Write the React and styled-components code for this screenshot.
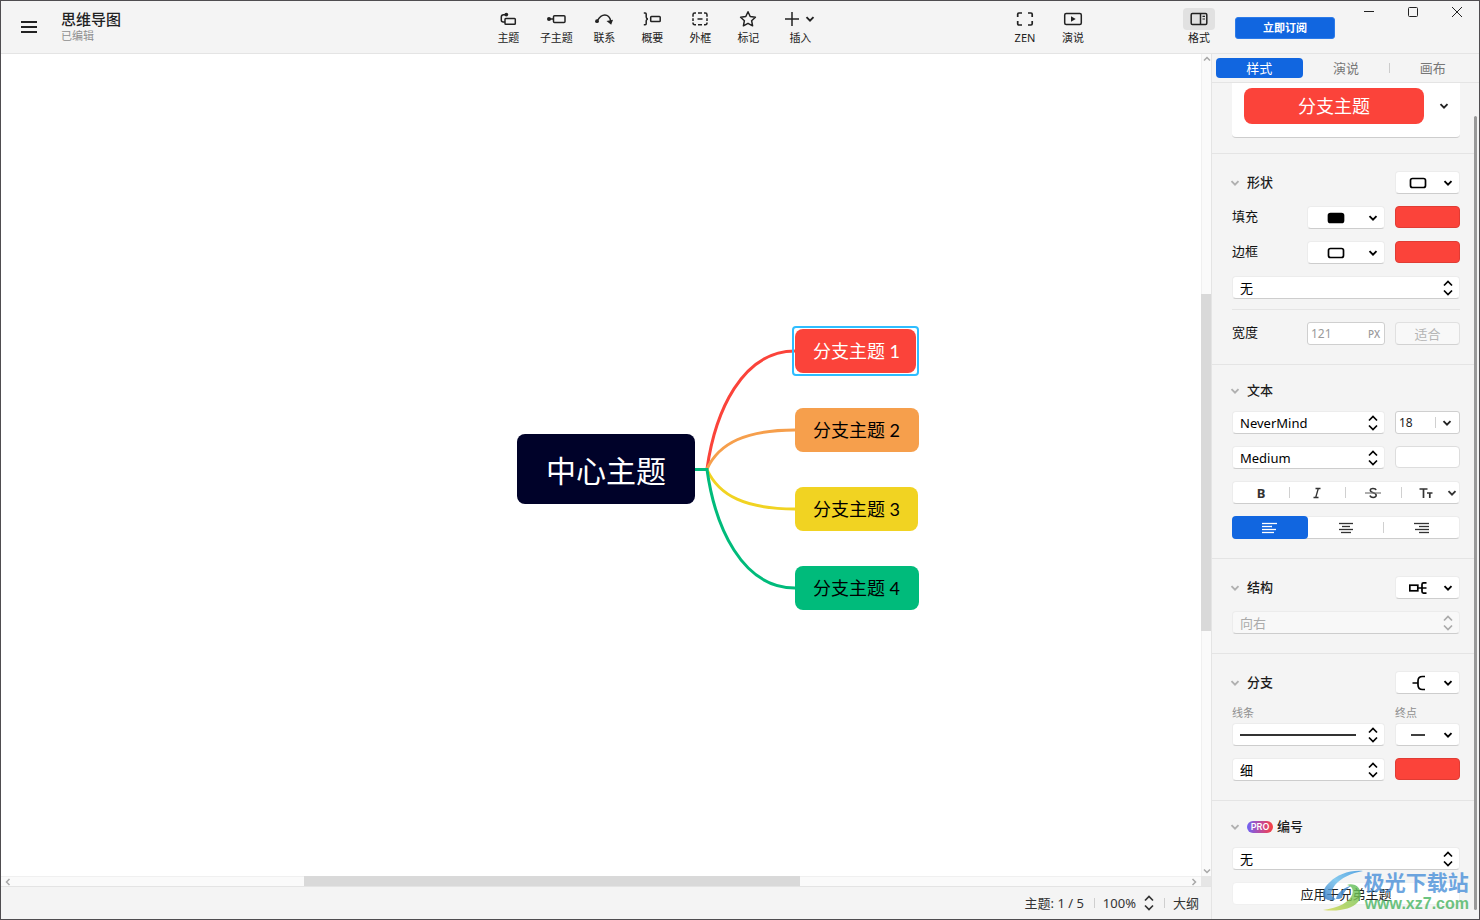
import styled, { createGlobalStyle, css } from 'styled-components'

const Ink = '#222222'
const Grey = '#f4f4f4'
const Line = '#e4e4e4'
const Blue = '#1166e0'
const Red = '#fb433a'
const UiFont = '"Noto Sans", "Noto Sans CJK SC", sans-serif'

const GlobalStyle = createGlobalStyle`
    *, *::before, *::after {
        box-sizing: border-box;
    }

    body {
        margin: 0;
        font-family: ${UiFont};
        font-size: 13px;
        line-height: 16px;
        color: ${Ink};
    }

    button, input, select {
        margin: 0;
        padding: 0;
        border: 0;
        background: none;
        color: inherit;
        font: inherit;
    }

    svg {
        display: block;
        flex: none;
        fill: none;
        stroke: currentColor;
        stroke-width: 1.5;
    }
`

const Window = styled.div`
    position: relative;
    display: flex;
    flex-direction: column;
    height: 100vh;
    border: 1px solid #4f4d50;
    background: #ffffff;
    overflow: hidden;
`

/* ---------- header ---------- */

const Header = styled.header`
    display: flex;
    height: 53px;
    flex: none;
    background: ${Grey};
    border-bottom: 1px solid ${Line};
`

const Spacer = styled.div`
    flex: ${({ $grow }) => $grow} 1 0;
    display: flex;
    align-items: center;
    min-width: 0;
`

const MenuButton = styled.button`
    padding: 0 24px 0 20px;

    svg {
        stroke-width: 2;
    }
`

const Title = styled.h1`
    margin: 0;
    font-size: 15px;
    line-height: 18px;
    font-weight: 500;
`

const Subtitle = styled.p`
    margin: 0;
    font-size: 11px;
    line-height: 16px;
    color: #8f8f8f;
`

const Tools = styled.nav`
    display: flex;
    margin-right: ${({ $gap }) => $gap || 0}px;
`

const Tool = styled.button`
    display: flex;
    flex-direction: column;
    align-items: center;
    width: ${({ $wide }) => ($wide ? 56 : 48)}px;
    padding-top: 7px;
    font-size: 11px;
    line-height: 16px;
`

const ToolIcon = styled.span`
    display: flex;
    align-items: center;
    justify-content: center;
    gap: 6px;
    width: 32px;
    height: 22px;
    border-radius: 4px;
    background: ${({ $on }) => ($on ? '#e1e1e1' : 'transparent')};
`

const Subscribe = styled.button`
    align-self: flex-start;
    width: 100px;
    height: 22px;
    margin: 16px 12px 0;
    border-radius: 3px;
    background: ${Blue};
    border: 1px solid #2c7be9;
    color: #ffffff;
    font-size: 11px;
    font-weight: 700;
`

const WindowButton = styled.button`
    display: flex;
    align-items: center;
    justify-content: center;
    width: 44px;
    height: 22px;

    svg {
        stroke-width: 1;
        overflow: visible;
    }
`

/* ---------- canvas ---------- */

const Main = styled.div`
    display: flex;
    flex: 1;
    min-height: 0;
`

const Work = styled.main`
    display: grid;
    grid-template: minmax(0, 1fr) 10px 33px / minmax(0, 1fr) 10px;
    flex: 1;
    min-width: 0;
`

const Canvas = styled.section`
    position: relative;
    overflow: hidden;
`

const Links = styled.svg`
    position: absolute;
    left: 694px;
    top: 280px;
    stroke-width: 3;
`

const Topic = styled.div`
    position: absolute;
    left: ${({ $x }) => $x}px;
    top: ${({ $y }) => $y}px;
    width: ${({ $w }) => $w}px;
    height: 44px;
    padding-left: 18px;
    border-radius: 8px;
    background: ${({ $color }) => $color};
    color: #000000;
    font-family: Lato, "Noto Sans CJK SC", sans-serif;
    font-size: 18px;
    line-height: 44px;
    white-space: nowrap;

    ${({ $selected }) => $selected && css`
        color: #ffffff;

        &::after {
            content: '';
            position: absolute;
            inset: -3px;
            border: 2px solid #2ebdff;
            border-radius: 4px;
        }
    `}
`

const CentralTopic = styled(Topic)`
    height: 70px;
    padding-left: 29px;
    color: #ffffff;
    font-size: 30px;
    line-height: 72px;
`

const Scrollbar = styled.div`
    display: flex;
    flex-direction: ${({ $vertical }) => ($vertical ? 'column' : 'row')};
    align-items: center;
    justify-content: space-between;
    background: #fafafa;
    color: #a8a8a8;
    padding: ${({ $vertical }) => ($vertical ? '2px 0' : '0 4px')};
    border-${({ $vertical }) => ($vertical ? 'left' : 'top')}: 1px solid #f0f0f0;
`

const Track = styled.div`
    display: flex;
    flex: 1;
    align-self: stretch;
    flex-direction: inherit;
    margin: ${({ $vertical }) => ($vertical ? '0 0 0 -1px' : '-1px 0 0')};
`

const Gap = styled.div`
    flex: ${({ $grow }) => $grow} 1 0;
`

const Thumb = styled(Gap)`
    background: #d9d9d9;
`

const Corner = styled.div`
    background: #e6e6e6;
`

const Footer = styled.footer`
    grid-column: 1 / -1;
    display: flex;
    align-items: center;
    justify-content: flex-end;
    padding-right: 12px;
    background: ${Grey};
    border-top: 1px solid ${Line};
`

const FooterItem = styled.button`
    display: flex;
    align-items: center;
    gap: 8px;
    color: #333333;

    & + & {
        margin-left: 10px;
        padding-left: 9px;
        background: linear-gradient(#cfcfcf, #cfcfcf) 0 50% / 1px 10px no-repeat;
    }
`

/* ---------- format panel ---------- */

const Panel = styled.aside`
    display: flex;
    flex-direction: column;
    width: 268px;
    flex: none;
    background: ${Grey};
    border-left: 1px solid ${Line};
`

const Tabs = styled.div`
    display: flex;
    flex: none;
    height: 29px;
    padding: 4px 3px 4px 4px;
    border-bottom: 1px solid ${Line};
`

const Tab = styled.button`
    flex: 1;
    border-radius: 4px;
    color: #777777;
    ${({ $divided }) => $divided && 'background: linear-gradient(#cccccc, #cccccc) 0 50% / 1px 10px no-repeat;'}

    &[aria-selected='true'] {
        background: ${Blue};
        color: #ffffff;
    }
`

const PanelBody = styled.div`
    display: flex;
    flex: 1;
    min-height: 0;
    overflow: hidden;
`

const Sections = styled.div`
    flex: 1;
    min-width: 0;
`

const PanelThumb = styled.div`
    width: 3px;
    margin: 33px 2px 9px 0;
    border-radius: 2px;
    background: #999999;
`

const Section = styled.section`
    display: flex;
    flex-direction: column;
    gap: 12px;
    padding: 17px 14px 19px 20px;
    border-bottom: 1px solid ${Line};

    &:last-child {
        border-bottom: 0;
    }
`

const box = css`
    height: 23px;
    border: 1px solid #ececec;
    border-bottom-color: #cdcdcd;
    border-radius: 4px;
    background: #ffffff;
`

const Row = styled.div`
    display: grid;
    grid-template-columns: ${({ $cols }) => $cols || '1fr 78px 65px'};
    gap: 10px;
    align-items: start;
`

const RowLabel = styled.label`
    line-height: 20px;
    color: #111111;
`

const SectionHead = styled.div`
    display: flex;
    align-items: center;
    min-height: 17px;
`

const SectionTitle = styled.h2`
    display: flex;
    align-items: center;
    flex: 1;
    margin: 0;
    font-size: 13px;
    line-height: 17px;
    font-weight: 500;
    color: #1c1c1c;

    svg {
        margin: 0 7px 0 -2px;
        color: #b0b0b0;
    }
`

const Pro = styled.span`
    width: 26px;
    margin-right: 4px;
    border-radius: 6px;
    background: linear-gradient(90deg, #6e63f5, #c04a98 55%, #fa4040);
    color: #ffffff;
    font-family: Inter, sans-serif;
    font-size: 9px;
    line-height: 12px;
    font-weight: 600;
    text-align: center;
`

const Divider = styled.hr`
    width: 100%;
    margin: -2px 0 0;
    border: 0;
    border-top: 1px solid ${Line};
`

const PreviewCard = styled.div`
    display: flex;
    align-items: flex-start;
    margin: 0 14px 0 20px;
    padding: 5px 11px 13px 12px;
    background: #ffffff;
    border-bottom: 1px solid #cdcdcd;
    border-radius: 0 0 4px 4px;
`

const PreviewWrap = styled.div`
    padding-bottom: 15px;
    border-bottom: 1px solid ${Line};
`

const Preview = styled.button`
    display: flex;
    align-items: center;
    gap: 15px;
`

const PreviewTopic = styled.span`
    width: 180px;
    border-radius: 8px;
    background: ${Red};
    color: #ffffff;
    font-size: 18px;
    line-height: 36px;
`

const IconSelect = styled.button`
    ${box}
    display: flex;
    align-items: center;
    justify-content: space-between;
    width: ${({ $full }) => ($full ? '100%' : '65px')};
    padding: 0 6px 0 ${({ $full }) => ($full ? 19 : 13)}px;
    color: #000000;
`

const Swatch = styled.button`
    height: 22px;
    border: 1px solid ${({ $color }) => ($color === '#ffffff' ? '#dddddd' : '#e03c34')};
    border-radius: 4px;
    background: ${({ $color }) => $color};
`

const SelectWrap = styled.div`
    ${box}
    display: grid;
    grid-template-columns: minmax(0, 1fr) auto;
    align-items: center;
    padding-right: 6px;
    color: ${({ $off }) => ($off ? '#aaaaaa' : '#000000')};
    ${({ $off }) => $off && 'background: #f8f8f8;'}

    select {
        grid-area: 1 / 1 / 2 / 3;
        width: 100%;
        height: 21px;
        padding: 0 20px 0 7px;
        appearance: none;
        opacity: 1;
        outline: none;
    }

    svg {
        grid-area: 1 / 2;
        pointer-events: none;
    }
`

const LineSample = styled.span`
    flex: 1;
    height: 2px;
    margin-right: 12px;
    background: #333333;
`

const LineSelect = styled(IconSelect)`
    width: 100%;
    padding: 0 6px 0 7px;
`

const NumberField = styled.span`
    display: flex;
    align-items: center;
    height: 23px;
    padding: 0 4px 0 3px;
    border: 1px solid #cfcfcf;
    border-radius: 3px;
    background: #ffffff;
    color: #9a9a9a;
    font-size: 10px;
    font-weight: 500;

    input {
        flex: 1;
        width: 100%;
        min-width: 0;
        font-size: 12px;
        font-weight: 400;
    }
`

const SizeField = styled(NumberField)`
    padding-right: 7px;
    color: ${Ink};
    gap: 6px;
`

const Tick = styled.span`
    width: 1px;
    height: 11px;
    background: #d0d0d0;
`

const FitButton = styled.button`
    height: 23px;
    border: 1px solid #e0e0e0;
    border-bottom-color: #d2d2d2;
    border-radius: 4px;
    background: #f8f8f8;
    color: #b5b5b5;
`

const Segments = styled.div`
    ${box}
    display: flex;
    align-items: center;
`

const Segment = styled.button`
    display: flex;
    align-items: center;
    justify-content: ${({ $menu }) => ($menu ? 'flex-end' : 'center')};
    gap: 14px;
    flex: 1;
    height: 21px;
    padding-right: ${({ $menu }) => ($menu ? 2 : 0)}px;
    color: #333333;

    & + & {
        background: linear-gradient(#d0d0d0, #d0d0d0) 0 50% / 1px 11px no-repeat;
    }

    &[aria-pressed='true'] {
        height: 23px;
        margin: -1px 0 -1px -1px;
        border-radius: 4px;
        background: ${Blue};
        color: #ffffff;
    }

    &[aria-pressed='true'] + & {
        background: none;
    }
`

const SmallLabels = styled(Row)`
    margin: 0 0 -8px;
    font-size: 11px;
    line-height: 13px;
    color: #8f8f8f;
`

const ApplyButton = styled.button`
    ${box}
    border-color: #f0f0f0;
`

/* ---------- watermark ---------- */

const Watermark = styled.div`
    position: absolute;
    right: 10px;
    bottom: 7px;
    display: flex;
    align-items: center;
    opacity: 0.8;
    pointer-events: none;
    font-weight: 700;

    svg {
        stroke: none;
    }
`

const WatermarkName = styled.div`
    font-size: 21px;
    line-height: 26px;
    color: #4a90d9;
`

const WatermarkSite = styled.div`
    padding-left: 1px;
    font-family: "Liberation Sans", sans-serif;
    font-size: 16px;
    line-height: 17px;
    color: #48b562;
`

/* ---------- icons ---------- */

const Down = () => (
    <svg width="10" height="8" viewBox="0 0 10 8"><path d="M1.500 2.200 5 5.700l3.500-3.500" strokeWidth="1.900" /></svg>
)

const UpDown = () => (
    <svg width="10" height="16" viewBox="0 0 10 16"><path d="M1 5.500 5 1.500l4 4M1 10.500l4 4 4-4" strokeWidth="1.700" /></svg>
)

const RectIcon = ({ fill }) => (
    <svg width="18" height="12" viewBox="0 0 18 12"><rect x="1.500" y="1.500" width="15" height="9" rx="2" fill={fill} strokeWidth="1.700" /></svg>
)

const icons = {
    topic: <svg width="18" height="18" viewBox="0 0 18 18"><rect x="6" y="8.500" width="10.300" height="5.700" rx=".8" /><path d="M6 12H4.300q-2 0-2-2V7q0-2.300 2.300-2.300H7" /><circle cx="7.300" cy="4.600" r="1.900" fill="currentColor" stroke="none" /></svg>,
    subtopic: <svg width="20" height="18" viewBox="0 0 20 18"><circle cx="3" cy="9" r="2" fill="currentColor" stroke="none" /><path d="M3 9h4" /><rect x="7.500" y="5.700" width="11.500" height="6.800" rx="1" /></svg>,
    relation: <svg width="20" height="18" viewBox="0 0 20 18"><path d="M3.300 10.800C5.500 7 8 5 10.800 5s5 2 6 6" /><circle cx="3" cy="11.200" r="1.900" fill="currentColor" stroke="none" /><path d="m12.500 11 6.500-1.200-1.800 5z" fill="currentColor" stroke="none" /></svg>,
    summary: <svg width="18" height="18" viewBox="0 0 18 18"><path d="M.8 3h1.400q1 0 1 1v3q0 1.500 1.600 1.900-1.600.4-1.600 1.900v3q0 1-1 1H.8" /><rect x="7.700" y="6.500" width="9.500" height="5" rx=".8" /></svg>,
    boundary: <svg width="18" height="18" viewBox="0 0 18 18"><path d="M2 6.800V4.700Q2 3 3.700 3H5M7 3h4M13 3h1.300Q16 3 16 4.700v2.100M16 8.200v2.800M16 12.400v.3q0 2-1.700 2H13M11 14.700H7M5 14.700H3.700q-1.700 0-1.700-2v-.3M2 11V8.200" /><path d="M6.500 9h5" /></svg>,
    marker: <svg width="18" height="18" viewBox="0 0 18 18"><path d="m9 1.800 2.200 4.700 5.200.7-3.800 3.500 1 5.100L9 13.300l-4.600 2.500 1-5.100-3.800-3.500 5.200-.7z" strokeLinejoin="round" /></svg>,
    insert: <><svg width="14" height="14" viewBox="0 0 14 14"><path d="M7 0v14M0 7h14" /></svg><Down /></>,
    zen: <svg width="18" height="18" viewBox="0 0 18 18"><path d="M1.700 7V4.200q0-1.200 1.200-1.200h3.100M12 3h3q1.200 0 1.200 1.200V7M16.200 11v2.800q0 1.200-1.200 1.200h-3M6 15H2.900q-1.200 0-1.200-1.200V11" strokeWidth="1.700" /></svg>,
    present: <svg width="20" height="18" viewBox="0 0 20 18"><rect x="1.700" y="3.500" width="16.600" height="11" rx="1.500" /><path d="M8 6.300v5.400L12.700 9z" fill="currentColor" stroke="none" /></svg>,
    format: <svg width="18" height="18" viewBox="0 0 18 18"><rect x="1.200" y="3.500" width="15.600" height="11" rx="1.200" /><path d="M10.500 3.500v11" /><path d="M12.500 6.300H15M12.500 9H15" strokeWidth="1.200" /></svg>,
}

const AlignIcon = ({ lines }) => (
    <svg width="16" height="12" viewBox="0 0 16 12">
        {lines.map(([x, w], i) => <path key={i} d={`M${x} ${1.5 + i * 3}h${w}`} strokeWidth="1.300" />)}
    </svg>
)

const tools = [
    ['topic', '主题'],
    ['subtopic', '子主题'],
    ['relation', '联系'],
    ['summary', '概要'],
    ['boundary', '外框'],
    ['marker', '标记'],
    ['insert', '插入'],
]

const topics = [
    { text: '分支主题 1', y: 275, w: 121, color: Red, selected: true },
    { text: '分支主题 2', y: 354, w: 124, color: '#f69f4c' },
    { text: '分支主题 3', y: 433, w: 123, color: '#f1d322' },
    { text: '分支主题 4', y: 512, w: 124, color: '#00bb7b' },
]

const ToolButton = ({ icon, label, on }) => (
    <Tool $wide={icon === 'insert'}>
        <ToolIcon $on={on}>{icons[icon]}</ToolIcon>
        {label}
    </Tool>
)

const Select = ({ label, value, disabled }) => (
    <SelectWrap $off={disabled}>
        <select aria-label={label} disabled={disabled}>
            <option>{value}</option>
        </select>
        <UpDown />
    </SelectWrap>
)

const Head = ({ title, pro, children }) => (
    <SectionHead>
        <SectionTitle><Down />{pro && <Pro>PRO</Pro>}{title}</SectionTitle>
        {children}
    </SectionHead>
)

const TopBar = () => (
    <Header>
        <Spacer $grow={14}>
            <MenuButton aria-label="菜单">
                <svg width="16" height="14" viewBox="0 0 16 14"><path d="M0 2h16M0 7h16M0 12h16" /></svg>
            </MenuButton>
            <div>
                <Title>思维导图</Title>
                <Subtitle>已编辑</Subtitle>
            </div>
        </Spacer>
        <Tools>
            {tools.map(([icon, label]) => <ToolButton key={icon} icon={icon} label={label} />)}
        </Tools>
        <Spacer $grow={5} />
        <Tools $gap={78}>
            <ToolButton icon="zen" label="ZEN" />
            <ToolButton icon="present" label="演说" />
        </Tools>
        <ToolButton icon="format" label="格式" on />
        <Subscribe>立即订阅</Subscribe>
        <WindowButton aria-label="最小化"><svg width="10" height="10"><path d="M0 4.500h10" /></svg></WindowButton>
        <WindowButton aria-label="最大化"><svg width="10" height="10"><rect x=".5" y=".5" width="9" height="9" rx="1" /></svg></WindowButton>
        <WindowButton aria-label="关闭"><svg width="10" height="10"><path d="m0 0 10 10M10 0 0 10" /></svg></WindowButton>
    </Header>
)

const MindMap = () => (
    <Canvas>
        <Links width="102" height="270" viewBox="695 334 102 270">
            <path stroke={Red} d="M707 469C715 412 742 351 795 351" />
            <path stroke="#f69f4c" d="M707 469C719 443 746 430 795 430" />
            <path stroke="#f1d322" d="M707 469.500C719 496 746 509 795 509" />
            <path stroke="#00bb7b" d="M695 469.500h12C715 527 742 588 795 588" />
        </Links>
        <CentralTopic $x={516} $y={380} $w={178} $color="#000229">中心主题</CentralTopic>
        {topics.map((t) => (
            <Topic key={t.text} $x={794} $y={t.y} $w={t.w} $color={t.color} $selected={t.selected}>{t.text}</Topic>
        ))}
    </Canvas>
)

const FormatPanel = () => (
    <Panel>
        <Tabs role="tablist">
            <Tab role="tab" aria-selected="true">样式</Tab>
            <Tab role="tab" aria-selected="false">演说</Tab>
            <Tab role="tab" aria-selected="false" $divided>画布</Tab>
        </Tabs>
        <PanelBody>
            <Sections>
                <PreviewWrap>
                    <PreviewCard>
                        <Preview><PreviewTopic>分支主题</PreviewTopic><Down /></Preview>
                    </PreviewCard>
                </PreviewWrap>

                <Section>
                    <Head title="形状">
                        <IconSelect aria-label="形状"><RectIcon /><Down /></IconSelect>
                    </Head>
                    <Row>
                        <RowLabel htmlFor="fill">填充</RowLabel>
                        <IconSelect $full id="fill"><RectIcon fill="currentColor" /><Down /></IconSelect>
                        <Swatch $color={Red} aria-label="填充" />
                    </Row>
                    <Row>
                        <RowLabel htmlFor="border">边框</RowLabel>
                        <IconSelect $full id="border"><RectIcon /><Down /></IconSelect>
                        <Swatch $color={Red} aria-label="边框" />
                    </Row>
                    <Select label="边框" value="无" />
                    <Divider />
                    <Row>
                        <RowLabel htmlFor="width">宽度</RowLabel>
                        <NumberField><input id="width" defaultValue="121" />PX</NumberField>
                        <FitButton disabled>适合</FitButton>
                    </Row>
                </Section>

                <Section>
                    <Head title="文本" />
                    <Row $cols="1fr 65px">
                        <Select label="字体" value="NeverMind" />
                        <SizeField><input aria-label="字号" defaultValue="18" /><Tick /><Down /></SizeField>
                    </Row>
                    <Row $cols="1fr 65px">
                        <Select label="字重" value="Medium" />
                        <Swatch $color="#ffffff" aria-label="文本颜色" />
                    </Row>
                    <Segments>
                        <Segment aria-label="粗体"><b>B</b></Segment>
                        <Segment aria-label="斜体">
                            <svg width="12" height="12" viewBox="0 0 12 12"><path d="M4.500 1.500h5M2.500 10.500h5M7.300 1.500 4.700 10.500" strokeWidth="1.300" /></svg>
                        </Segment>
                        <Segment aria-label="删除线">
                            <svg width="16" height="12" viewBox="0 0 16 12"><path d="M11 3.200C10.500 1 5.300.8 5.300 3.300c0 3 5.900 2 5.900 5 0 2.800-5.700 2.700-6.200.2" strokeWidth="1.500" /><path d="M0 6h16" strokeWidth="1.200" stroke="#777777" /></svg>
                        </Segment>
                        <Segment aria-label="大小写" $menu>
                            <svg width="14" height="12" viewBox="0 0 14 12"><path d="M.5 2h8M4.500 2v9M8 6h5.500M10.800 6v5" strokeWidth="1.700" /></svg>
                            <Down />
                        </Segment>
                    </Segments>
                    <Segments>
                        <Segment aria-label="左对齐" aria-pressed="true"><AlignIcon lines={[[0, 15], [0, 10], [0, 14], [0, 12]]} /></Segment>
                        <Segment aria-label="居中"><AlignIcon lines={[[1, 14], [4, 8], [1, 14], [3, 10]]} /></Segment>
                        <Segment aria-label="右对齐"><AlignIcon lines={[[1, 15], [6, 10], [2, 14], [6, 10]]} /></Segment>
                    </Segments>
                </Section>

                <Section>
                    <Head title="结构">
                        <IconSelect aria-label="结构">
                            <svg width="18" height="12" viewBox="0 0 18 12"><rect x=".8" y="3.200" width="8" height="5.600" strokeWidth="1.700" /><path d="M9 6h8.500M17.500 .9h-3q-1.500 0-1.500 1.500v7.200q0 1.500 1.500 1.500h3" strokeWidth="1.700" /></svg>
                            <Down />
                        </IconSelect>
                    </Head>
                    <Select label="方向" value="向右" disabled />
                </Section>

                <Section>
                    <Head title="分支">
                        <IconSelect aria-label="分支">
                            <svg width="18" height="16" viewBox="0 0 18 16"><path d="M3.500 8h5.500M16 1.500h-2.500Q9 1.500 9 6v4q0 4.500 4.500 4.500h2.500" strokeWidth="1.700" /></svg>
                            <Down />
                        </IconSelect>
                    </Head>
                    <SmallLabels $cols="1fr 65px">
                        <label htmlFor="line">线条</label>
                        <label htmlFor="end">终点</label>
                    </SmallLabels>
                    <Row $cols="1fr 65px">
                        <LineSelect id="line"><LineSample /><UpDown /></LineSelect>
                        <IconSelect id="end">
                            <svg width="18" height="12" viewBox="0 0 18 12"><path d="M2 6h14" /></svg>
                            <Down />
                        </IconSelect>
                    </Row>
                    <Row $cols="1fr 65px">
                        <Select label="线条粗细" value="细" />
                        <Swatch $color={Red} aria-label="线条颜色" />
                    </Row>
                </Section>

                <Section>
                    <Head title="编号" pro />
                    <Select label="编号" value="无" />
                    <ApplyButton>应用于兄弟主题</ApplyButton>
                </Section>
            </Sections>
            <PanelThumb />
        </PanelBody>
    </Panel>
)

const App = () => {
    return (
        <>
            <GlobalStyle />
            <Window>
                <TopBar />
                <Main>
                    <Work>
                        <MindMap />
                        <Scrollbar $vertical>
                            <svg width="8" height="6" viewBox="0 0 8 6"><path d="m1 4.500 3-3 3 3" /></svg>
                            <Track $vertical><Gap $grow={232} /><Thumb $grow={337} /><Gap $grow={237} /></Track>
                            <svg width="8" height="6" viewBox="0 0 8 6"><path d="m1 1.500 3 3 3-3" /></svg>
                        </Scrollbar>
                        <Scrollbar>
                            <svg width="6" height="8" viewBox="0 0 6 8"><path d="m4.500 1-3 3 3 3" /></svg>
                            <Track><Gap $grow={293} /><Thumb $grow={496} /><Gap $grow={391} /></Track>
                            <svg width="6" height="8" viewBox="0 0 6 8"><path d="m1.500 1 3 3-3 3" /></svg>
                        </Scrollbar>
                        <Corner />
                        <Footer>
                            <FooterItem>主题: 1 / 5</FooterItem>
                            <FooterItem>100%<UpDown /></FooterItem>
                            <FooterItem>大纲</FooterItem>
                        </Footer>
                    </Work>
                    <FormatPanel />
                </Main>
                <Watermark>
                    <svg width="42" height="42" viewBox="0 0 42 42">
                        <defs>
                            <linearGradient id="sky" x1="1" y1="0" x2="0" y2="1">
                                <stop offset="0" stopColor="#2f8fdc" />
                                <stop offset=".5" stopColor="#6cc0ee" />
                                <stop offset="1" stopColor="#2a6fbe" />
                            </linearGradient>
                            <linearGradient id="leaf" x1="1" y1="0" x2="0" y2="1">
                                <stop offset="0" stopColor="#4fb95a" />
                                <stop offset="1" stopColor="#d9dc4a" />
                            </linearGradient>
                        </defs>
                        <path d="M41 1C27 0 15 5 8 12 0 19-2 28 6 30c3 1 6 0 8-1-6-2-6-7-1-14C19 8 29 3 41 1z" fill="url(#sky)" />
                        <path d="M14 29c1-6 8-12 17-14-6 3-10 8-11 13-2 1-4 1-6 1z" fill="#3c86cf" />
                        <path d="M1 40c15 2 29-1 35-8 5-6 3-14-3-17-3-1-6-1-8 0 5 1 7 5 5 10C27 32 17 38 1 40z" fill="url(#leaf)" />
                    </svg>
                    <div>
                        <WatermarkName>极光下载站</WatermarkName>
                        <WatermarkSite>www.xz7.com</WatermarkSite>
                    </div>
                </Watermark>
            </Window>
        </>
    )
}

export default App
